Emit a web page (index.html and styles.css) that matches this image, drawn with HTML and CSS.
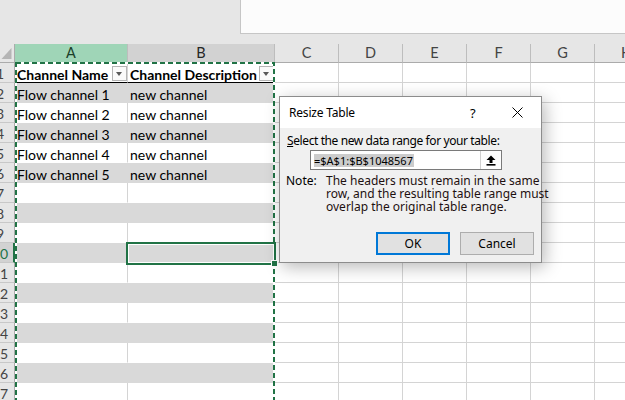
FILE: index.html
```html
<!DOCTYPE html>
<html>
<head>
<meta charset="utf-8">
<link rel="stylesheet" href="styles.css">
</head>
<body>
<div class="top"><div class="top-spacer"></div><div class="formula"></div></div>
<div class="sheet">
  <div class="row head">
    <div class="cell ch w-rh corner"><svg width="15" height="18" viewBox="0 0 15 18"><path d="M11.5 4 V15 H1.5 Z" fill="#b5b5b5"/></svg></div>
    <div class="cell ch w-a ch-a">A</div>
    <div class="cell ch w-b ch-b">B</div>
    <div class="cell ch w-c">C</div>
    <div class="cell ch w-c">D</div>
    <div class="cell ch w-c">E</div>
    <div class="cell ch w-c">F</div>
    <div class="cell ch w-c">G</div>
    <div class="cell ch w-c">H</div>
  </div>
  <div class="row">
    <div class="cell rh w-rh"><span>1</span></div>
    <div class="cell w-a thdr"><span>Channel Name</span><i class="filter"></i></div>
    <div class="cell w-b thdr"><span>Channel Description</span><i class="filter"></i></div>
    <div class="cell w-c"></div><div class="cell w-c"></div><div class="cell w-c"></div><div class="cell w-c"></div><div class="cell w-c"></div><div class="cell w-c"></div>
  </div>
  <div class="row">
    <div class="cell rh w-rh"><span>2</span></div>
    <div class="cell w-a band">Flow channel 1</div>
    <div class="cell w-b band">new channel</div>
    <div class="cell w-c"></div><div class="cell w-c"></div><div class="cell w-c"></div><div class="cell w-c"></div><div class="cell w-c"></div><div class="cell w-c"></div>
  </div>
  <div class="row">
    <div class="cell rh w-rh"><span>3</span></div>
    <div class="cell w-a wt">Flow channel 2</div>
    <div class="cell w-b wt">new channel</div>
    <div class="cell w-c"></div><div class="cell w-c"></div><div class="cell w-c"></div><div class="cell w-c"></div><div class="cell w-c"></div><div class="cell w-c"></div>
  </div>
  <div class="row">
    <div class="cell rh w-rh"><span>4</span></div>
    <div class="cell w-a band">Flow channel 3</div>
    <div class="cell w-b band">new channel</div>
    <div class="cell w-c"></div><div class="cell w-c"></div><div class="cell w-c"></div><div class="cell w-c"></div><div class="cell w-c"></div><div class="cell w-c"></div>
  </div>
  <div class="row">
    <div class="cell rh w-rh"><span>5</span></div>
    <div class="cell w-a wt">Flow channel 4</div>
    <div class="cell w-b wt">new channel</div>
    <div class="cell w-c"></div><div class="cell w-c"></div><div class="cell w-c"></div><div class="cell w-c"></div><div class="cell w-c"></div><div class="cell w-c"></div>
  </div>
  <div class="row">
    <div class="cell rh w-rh"><span>6</span></div>
    <div class="cell w-a band">Flow channel 5</div>
    <div class="cell w-b band">new channel</div>
    <div class="cell w-c"></div><div class="cell w-c"></div><div class="cell w-c"></div><div class="cell w-c"></div><div class="cell w-c"></div><div class="cell w-c"></div>
  </div>
  <div class="row">
    <div class="cell rh w-rh"><span>7</span></div>
    <div class="cell w-a wt"></div><div class="cell w-b wt"></div>
    <div class="cell w-c"></div><div class="cell w-c"></div><div class="cell w-c"></div><div class="cell w-c"></div><div class="cell w-c"></div><div class="cell w-c"></div>
  </div>
  <div class="row">
    <div class="cell rh w-rh"><span>8</span></div>
    <div class="cell w-a band"></div><div class="cell w-b band"></div>
    <div class="cell w-c"></div><div class="cell w-c"></div><div class="cell w-c"></div><div class="cell w-c"></div><div class="cell w-c"></div><div class="cell w-c"></div>
  </div>
  <div class="row">
    <div class="cell rh w-rh"><span>9</span></div>
    <div class="cell w-a wt"></div><div class="cell w-b wt"></div>
    <div class="cell w-c"></div><div class="cell w-c"></div><div class="cell w-c"></div><div class="cell w-c"></div><div class="cell w-c"></div><div class="cell w-c"></div>
  </div>
  <div class="row">
    <div class="cell rh w-rh rh-sel"><span>10</span></div>
    <div class="cell w-a band"></div><div class="cell w-b band"></div>
    <div class="cell w-c"></div><div class="cell w-c"></div><div class="cell w-c"></div><div class="cell w-c"></div><div class="cell w-c"></div><div class="cell w-c"></div>
  </div>
  <div class="row">
    <div class="cell rh w-rh"><span>11</span></div>
    <div class="cell w-a wt"></div><div class="cell w-b wt"></div>
    <div class="cell w-c"></div><div class="cell w-c"></div><div class="cell w-c"></div><div class="cell w-c"></div><div class="cell w-c"></div><div class="cell w-c"></div>
  </div>
  <div class="row">
    <div class="cell rh w-rh"><span>12</span></div>
    <div class="cell w-a band"></div><div class="cell w-b band"></div>
    <div class="cell w-c"></div><div class="cell w-c"></div><div class="cell w-c"></div><div class="cell w-c"></div><div class="cell w-c"></div><div class="cell w-c"></div>
  </div>
  <div class="row">
    <div class="cell rh w-rh"><span>13</span></div>
    <div class="cell w-a wt"></div><div class="cell w-b wt"></div>
    <div class="cell w-c"></div><div class="cell w-c"></div><div class="cell w-c"></div><div class="cell w-c"></div><div class="cell w-c"></div><div class="cell w-c"></div>
  </div>
  <div class="row">
    <div class="cell rh w-rh"><span>14</span></div>
    <div class="cell w-a band"></div><div class="cell w-b band"></div>
    <div class="cell w-c"></div><div class="cell w-c"></div><div class="cell w-c"></div><div class="cell w-c"></div><div class="cell w-c"></div><div class="cell w-c"></div>
  </div>
  <div class="row">
    <div class="cell rh w-rh"><span>15</span></div>
    <div class="cell w-a wt"></div><div class="cell w-b wt"></div>
    <div class="cell w-c"></div><div class="cell w-c"></div><div class="cell w-c"></div><div class="cell w-c"></div><div class="cell w-c"></div><div class="cell w-c"></div>
  </div>
  <div class="row">
    <div class="cell rh w-rh"><span>16</span></div>
    <div class="cell w-a band"></div><div class="cell w-b band"></div>
    <div class="cell w-c"></div><div class="cell w-c"></div><div class="cell w-c"></div><div class="cell w-c"></div><div class="cell w-c"></div><div class="cell w-c"></div>
  </div>
  <div class="row">
    <div class="cell rh w-rh"><span>17</span></div>
    <div class="cell w-a wt"></div><div class="cell w-b wt"></div>
    <div class="cell w-c"></div><div class="cell w-c"></div><div class="cell w-c"></div><div class="cell w-c"></div><div class="cell w-c"></div><div class="cell w-c"></div>
  </div>

  <svg class="ants" width="300" height="360" viewBox="0 0 300 360">
    <rect x="16" y="19" width="258" height="400" fill="none" stroke="#ffffff" stroke-width="2"/>
    <rect x="16" y="19" width="258" height="400" fill="none" stroke="#217346" stroke-width="2" stroke-dasharray="5 3"/>
  </svg>
  <div class="selbox"><i class="handle"></i></div>
</div>

<div class="dialog">
  <div class="dlg-title">
    <span class="dlg-caption">Resize Table</span>
    <span class="dlg-help">?</span>
    <span class="dlg-close"><svg width="11" height="11" viewBox="0 0 11 11"><path d="M0.5 0.5 L10.5 10.5 M10.5 0.5 L0.5 10.5" stroke="#000" stroke-width="1"/></svg></span>
  </div>
  <div class="dlg-body">
    <div class="dlg-label"><u>S</u>elect the new data range for your table:</div>
    <div class="dlg-input">
      <span class="dlg-value"><span class="dlg-sel">=$A$1:$B$1048567</span></span>
      <span class="dlg-collapse"><svg width="10" height="11" viewBox="0 0 10 11"><path d="M5 0.5 L9.5 5 H6.5 V8 H3.5 V5 H0.5 Z" fill="#000"/><rect x="0.5" y="9" width="9" height="1.6" fill="#000"/></svg></span>
    </div>
    <div class="dlg-note">
      <span class="note-key">Note:</span>
      <span class="note-text">The headers must remain in the same<br>row, and the resulting table range must<br>overlap the original table range.</span>
    </div>
    <div class="dlg-buttons">
      <span class="btn btn-primary">OK</span>
      <span class="btn">Cancel</span>
    </div>
  </div>
</div>
</body>
</html>
```
FILE: styles.css
```css
html, body {
  margin: 0;
  padding: 0;
}
body {
  width: 625px;
  height: 400px;
  overflow: hidden;
  position: relative;
  background: #ffffff;
  font-family: Lato, "Liberation Sans", sans-serif;
}

.top {
  display: flex;
  height: 44px;
  background: #e6e6e6;
}
.top-spacer {
  flex: none;
  width: 240px;
}
.formula {
  flex: 1;
  height: 34px;
  box-sizing: border-box;
  background: #fcfcfc;
  border-left: 1px solid #c6c6c6;
  border-bottom: 1px solid #c6c6c6;
}

.sheet {
  position: relative;
}
.row {
  display: flex;
  height: 20px;
}
.row.head {
  height: 19px;
}
.cell {
  flex: none;
  box-sizing: border-box;
  height: 100%;
  border-right: 1px solid #d4d4d4;
  border-bottom: 1px solid #d4d4d4;
  font-size: 14px;
  line-height: 19px;
  padding-left: 2px;
  padding-top: 2px;
  white-space: nowrap;
  overflow: hidden;
  color: #000;
}
.w-rh { width: 15px; }
.w-a { width: 113px; }
.w-b { width: 147px; }
.w-c { width: 64px; }

.ch {
  background: #e6e6e6;
  border-right-color: #bdbdbd;
  border-bottom-color: #ababab;
  text-align: center;
  padding: 0;
  line-height: 17px;
  font-size: 14.5px;
  color: #444;
}
.corner {
  border-right-color: #ababab;
}
.corner svg {
  display: block;
}
.ch-a {
  background: #9fd5b7;
  color: #1c3f2a;
}
.ch-b {
  background: #d2d2d2;
  color: #262626;
}

.rh {
  background: #e6e6e6;
  border-right-color: #ababab;
  border-bottom-color: #c8c8c8;
  padding: 1px 0 0 0;
  color: #444;
}
.rh span {
  display: block;
  width: 30px;
  margin-left: -15px;
  text-align: center;
}
.rh-sel {
  background: #d2d2d2;
  color: #217346;
  border-right: 2px solid #217346;
}

.thdr {
  display: flex;
  justify-content: space-between;
  background: #fff;
  border-bottom-color: #000;
  font-weight: bold;
  padding-top: 0;
}
.thdr span {
  padding-top: 2px;
}
.filter {
  flex: none;
  position: relative;
  width: 15px;
  height: 15px;
  margin-top: 3px;
  box-sizing: border-box;
  border: 1px solid #b4b4b4;
  background: #fafafa;
}
.filter::after {
  content: "";
  position: absolute;
  left: 3px;
  top: 5px;
  border-left: 3.5px solid transparent;
  border-right: 3.5px solid transparent;
  border-top: 4px solid #595959;
}
.band {
  background: #d9d9d9;
  border-right-color: #d9d9d9;
  border-bottom-color: #d9d9d9;
}
.wt {
  background: #fff;
  border-bottom-color: #fff;
}

.ants {
  position: absolute;
  left: 0;
  top: 0;
  pointer-events: none;
}
.selbox {
  position: absolute;
  left: 126px;
  top: 198px;
  width: 150px;
  height: 23px;
  box-sizing: border-box;
  border: 2px solid #217346;
  box-shadow: inset 0 0 0 1px #ffffff;
}
.handle {
  position: absolute;
  right: -4px;
  bottom: -4px;
  width: 5px;
  height: 5px;
  background: #217346;
  border: 1px solid #fff;
}

.dialog {
  position: absolute;
  left: 279px;
  top: 96px;
  width: 263px;
  height: 167px;
  box-sizing: border-box;
  border: 1px solid #8c8c8c;
  background: #f0f0f0;
  box-shadow: 3px 4px 16px rgba(0, 0, 0, 0.28);
  font-family: "Noto Sans", "Open Sans", sans-serif;
  font-size: 12px;
  color: #000;
  display: flex;
  flex-direction: column;
}
.dlg-title {
  height: 31px;
  background: #fff;
  display: flex;
  align-items: center;
  padding-left: 9px;
}
.dlg-caption {
  flex: 1;
  letter-spacing: -0.2px;
}
.dlg-help {
  width: 12px;
  margin-right: 30px;
  font-size: 13px;
}
.dlg-close {
  width: 11px;
  height: 11px;
  margin-right: 18px;
}
.dlg-close svg {
  display: block;
}
.dlg-body {
  flex: 1;
  padding: 5px 7px 0 7px;
  display: flex;
  flex-direction: column;
}
.dlg-label {
  line-height: 16px;
  letter-spacing: -0.4px;
  white-space: nowrap;
}
.dlg-input {
  margin: 1px 0 0 23px;
  width: 192px;
  height: 20px;
  box-sizing: border-box;
  border: 1px solid #7a7a7a;
  background: #fff;
  display: flex;
}
.dlg-value {
  flex: 1;
  padding: 2px 0 0 3px;
  font-size: 11px;
}
.dlg-sel {
  display: inline-block;
  background: #cccccc;
  line-height: 13px;
  height: 13px;
  padding-right: 1px;
}
.dlg-collapse {
  width: 20px;
  border-left: 1px solid #cfcfcf;
  background: #fdfdfd;
  display: flex;
  align-items: center;
  justify-content: center;
}
.dlg-collapse svg {
  display: block;
}
.dlg-note {
  display: flex;
  margin-top: 4px;
  margin-left: -1px;
  line-height: 13px;
  white-space: nowrap;
}
.note-key {
  width: 40px;
  flex: none;
}
.note-text {
  color: #1e1010;
}
.dlg-buttons {
  display: flex;
  justify-content: flex-end;
  gap: 10px;
  margin-top: 19px;
}
.btn {
  width: 74px;
  height: 23px;
  box-sizing: border-box;
  border: 1px solid #adadad;
  background: #e1e1e1;
  display: flex;
  align-items: center;
  justify-content: center;
}
.btn-primary {
  border: 2px solid #0078d7;
}
```
